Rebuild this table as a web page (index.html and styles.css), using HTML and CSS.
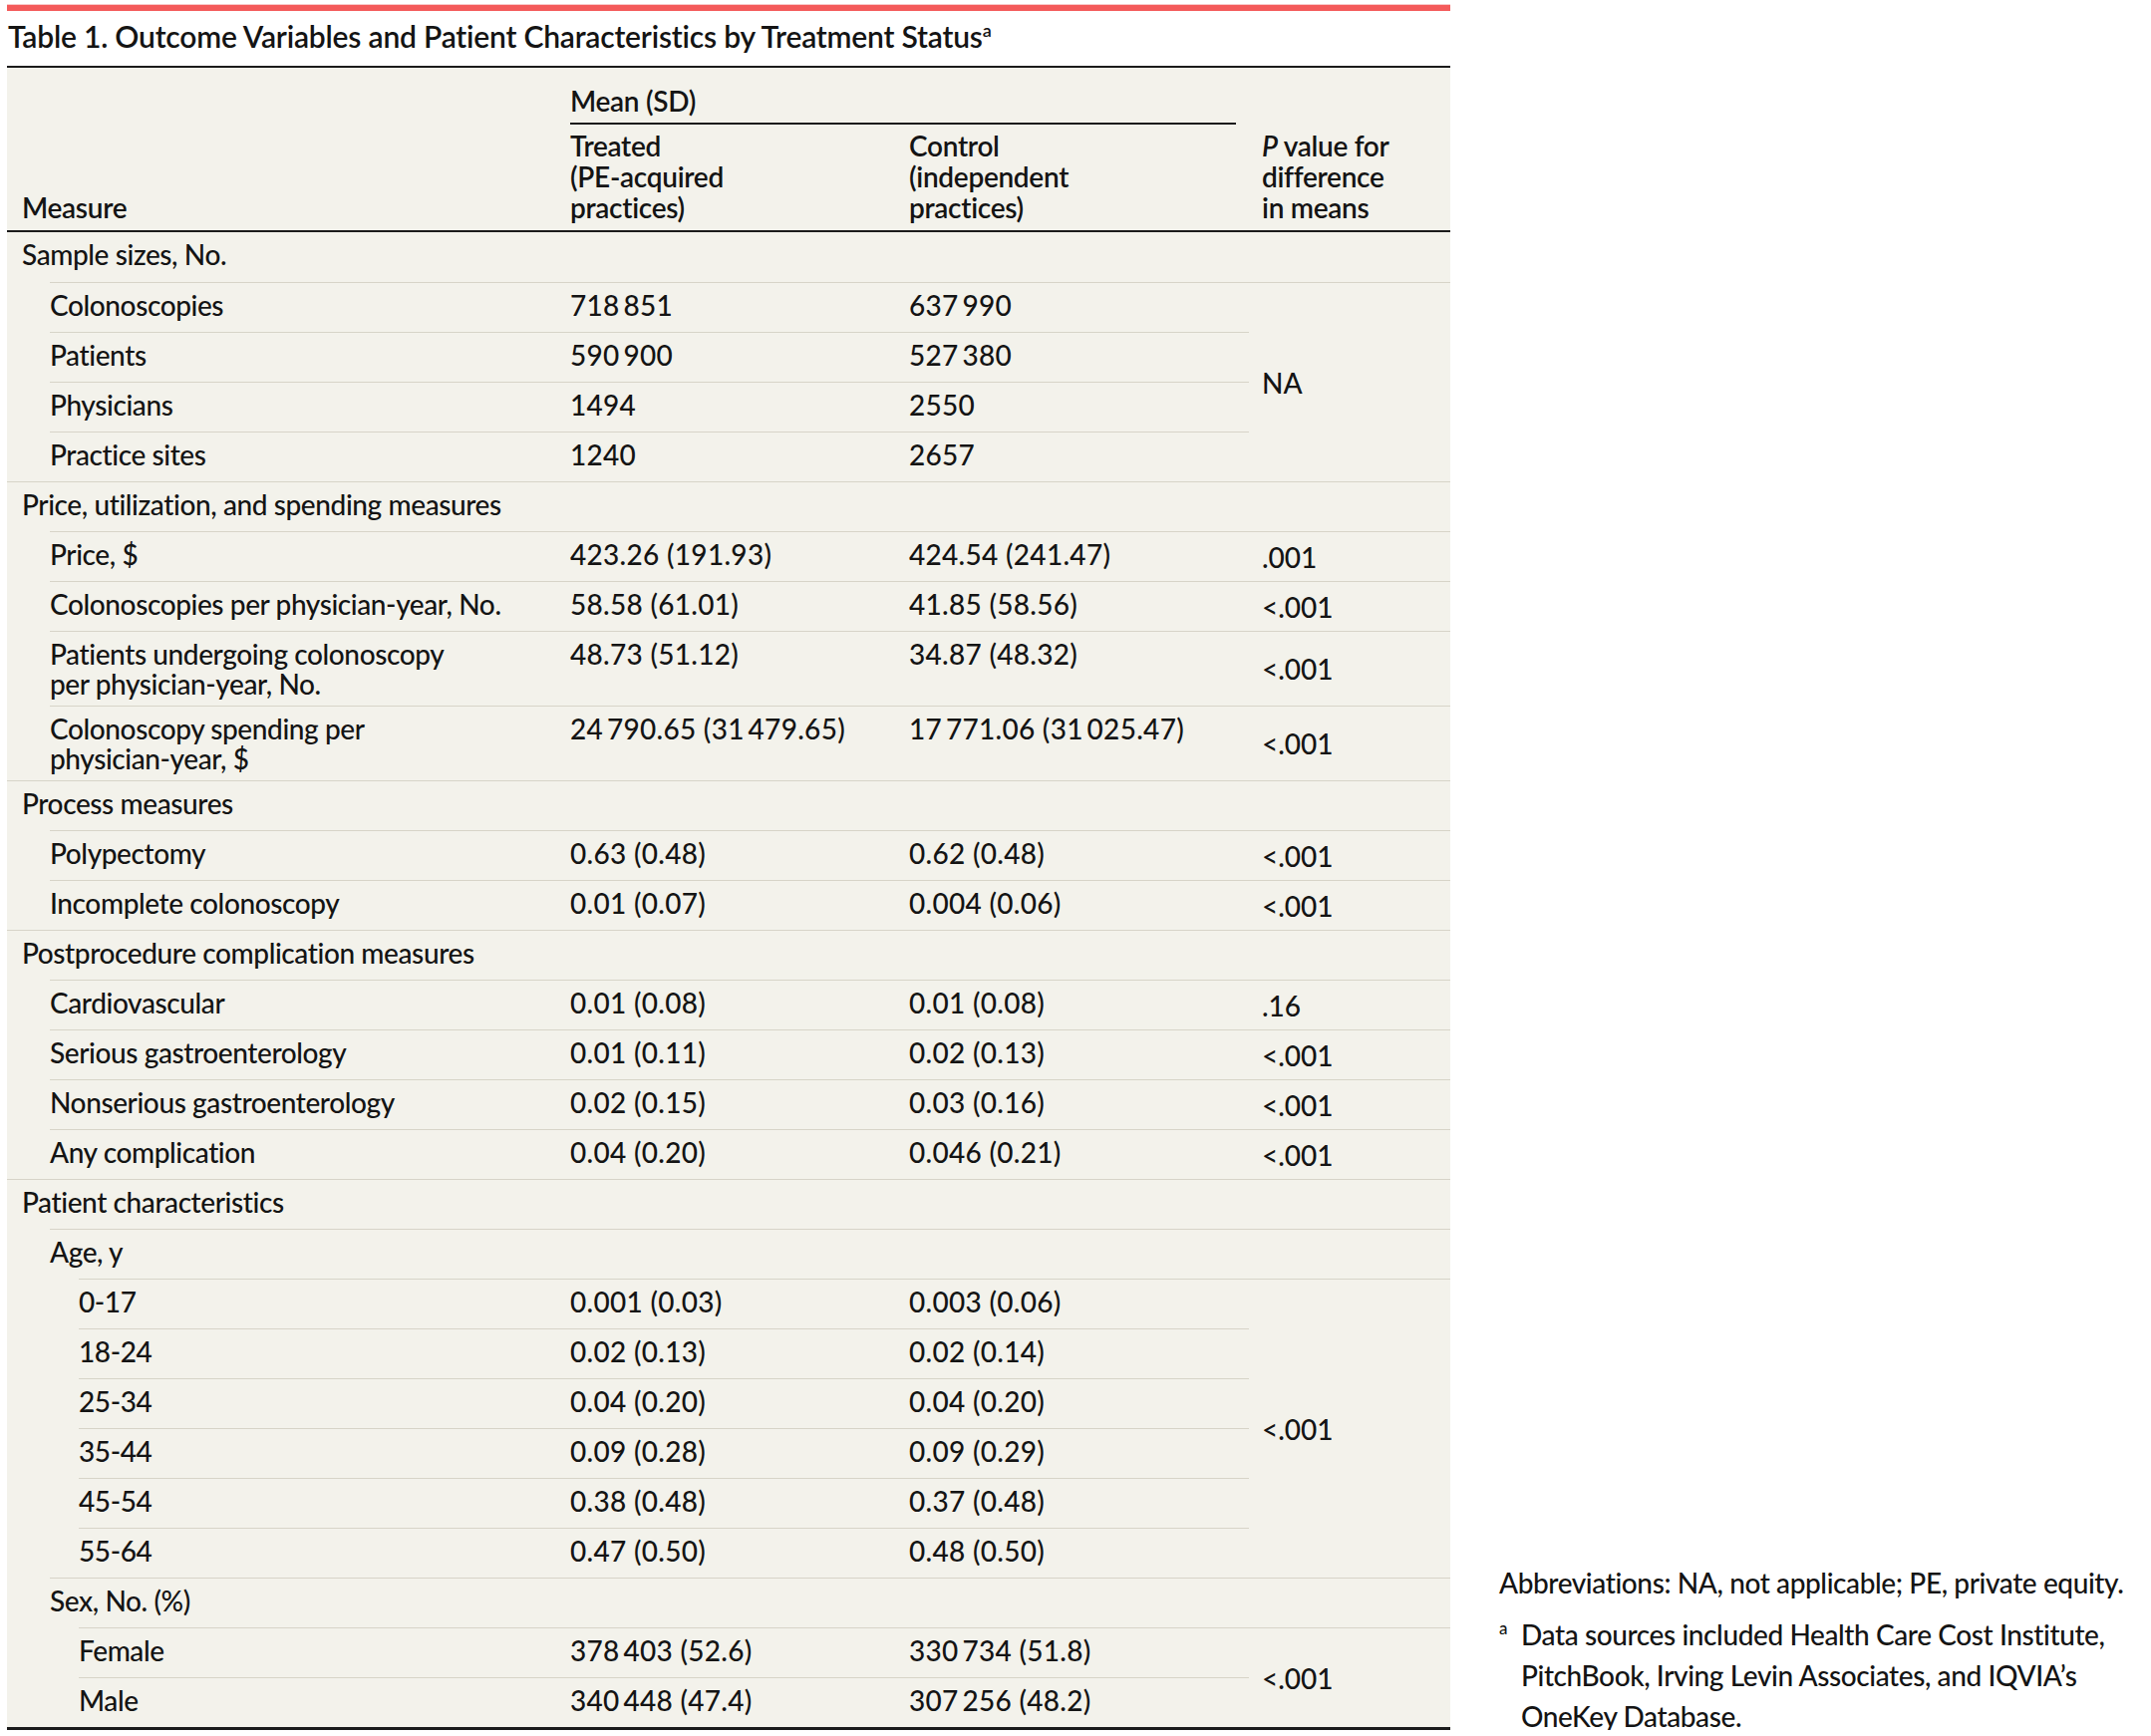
FILE: index.html
```html
<!DOCTYPE html>
<html lang="en">
<head>
<meta charset="utf-8">
<title>Table 1</title>
<link rel="stylesheet" href="styles.css">
</head>
<body>
<div class="page">
  <div class="main">
    <div class="bar"></div>
    <h1 class="title">Table 1. Outcome Variables and Patient Characteristics by Treatment Status<sup>a</sup></h1>
    <table class="tbl">
      <colgroup><col class="c1"><col class="c2"><col class="c3"><col class="c4"></colgroup>
      <thead>
        <tr>
          <th rowspan="2" class="h-end">Measure</th>
          <th colspan="2" class="h-mean"><div class="mean">Mean (SD)</div></th>
          <th rowspan="2" class="h-end h-p"><i>P</i> value for<br>difference<br>in means</th>
        </tr>
        <tr>
          <th class="h-end h-sub">Treated<br>(PE-acquired<br>practices)</th>
          <th class="h-end h-sub">Control<br>(independent<br>practices)</th>
        </tr>
      </thead>
      <tbody>
        <tr class="grp first"><td colspan="4">Sample sizes, No.</td></tr>
        <tr><td class="m"><div class="l1">Colonoscopies</div></td><td>718&#8201;851</td><td>637&#8201;990</td><td class="p" rowspan="4">NA</td></tr>
        <tr><td class="m"><div class="l1">Patients</div></td><td>590&#8201;900</td><td>527&#8201;380</td></tr>
        <tr><td class="m"><div class="l1">Physicians</div></td><td>1494</td><td>2550</td></tr>
        <tr><td class="m"><div class="l1">Practice sites</div></td><td>1240</td><td>2657</td></tr>

        <tr class="grp"><td colspan="4">Price, utilization, and spending measures</td></tr>
        <tr><td class="m"><div class="l1">Price, $</div></td><td>423.26 (191.93)</td><td>424.54 (241.47)</td><td class="p">.001</td></tr>
        <tr><td class="m"><div class="l1">Colonoscopies per physician-year, No.</div></td><td>58.58 (61.01)</td><td>41.85 (58.56)</td><td class="p">&lt;.001</td></tr>
        <tr><td class="m"><div class="l1">Patients undergoing colonoscopy<br>per physician-year, No.</div></td><td>48.73 (51.12)</td><td>34.87 (48.32)</td><td class="p">&lt;.001</td></tr>
        <tr><td class="m"><div class="l1">Colonoscopy spending per<br>physician-year, $</div></td><td>24&#8201;790.65 (31&#8201;479.65)</td><td>17&#8201;771.06 (31&#8201;025.47)</td><td class="p">&lt;.001</td></tr>

        <tr class="grp"><td colspan="4">Process measures</td></tr>
        <tr><td class="m"><div class="l1">Polypectomy</div></td><td>0.63 (0.48)</td><td>0.62 (0.48)</td><td class="p">&lt;.001</td></tr>
        <tr><td class="m"><div class="l1">Incomplete colonoscopy</div></td><td>0.01 (0.07)</td><td>0.004 (0.06)</td><td class="p">&lt;.001</td></tr>

        <tr class="grp"><td colspan="4">Postprocedure complication measures</td></tr>
        <tr><td class="m"><div class="l1">Cardiovascular</div></td><td>0.01 (0.08)</td><td>0.01 (0.08)</td><td class="p">.16</td></tr>
        <tr><td class="m"><div class="l1">Serious gastroenterology</div></td><td>0.01 (0.11)</td><td>0.02 (0.13)</td><td class="p">&lt;.001</td></tr>
        <tr><td class="m"><div class="l1">Nonserious gastroenterology</div></td><td>0.02 (0.15)</td><td>0.03 (0.16)</td><td class="p">&lt;.001</td></tr>
        <tr><td class="m"><div class="l1">Any complication</div></td><td>0.04 (0.20)</td><td>0.046 (0.21)</td><td class="p">&lt;.001</td></tr>

        <tr class="grp"><td colspan="4">Patient characteristics</td></tr>
        <tr class="sub"><td class="m"><div class="l1">Age, y</div></td><td></td><td></td><td></td></tr>
        <tr><td class="m"><div class="l2">0-17</div></td><td>0.001 (0.03)</td><td>0.003 (0.06)</td><td class="p" rowspan="6">&lt;.001</td></tr>
        <tr><td class="m"><div class="l2">18-24</div></td><td>0.02 (0.13)</td><td>0.02 (0.14)</td></tr>
        <tr><td class="m"><div class="l2">25-34</div></td><td>0.04 (0.20)</td><td>0.04 (0.20)</td></tr>
        <tr><td class="m"><div class="l2">35-44</div></td><td>0.09 (0.28)</td><td>0.09 (0.29)</td></tr>
        <tr><td class="m"><div class="l2">45-54</div></td><td>0.38 (0.48)</td><td>0.37 (0.48)</td></tr>
        <tr><td class="m"><div class="l2">55-64</div></td><td>0.47 (0.50)</td><td>0.48 (0.50)</td></tr>
        <tr class="sub"><td class="m"><div class="l1">Sex, No. (%)</div></td><td></td><td></td><td></td></tr>
        <tr><td class="m"><div class="l2">Female</div></td><td>378&#8201;403 (52.6)</td><td>330&#8201;734 (51.8)</td><td class="p" rowspan="2">&lt;.001</td></tr>
        <tr><td class="m"><div class="l2">Male</div></td><td>340&#8201;448 (47.4)</td><td>307&#8201;256 (48.2)</td></tr>
      </tbody>
    </table>
  </div>
  <aside class="notes">
    <p class="abbr">Abbreviations: NA, not applicable; PE, private equity.</p>
    <div class="fn"><sup>a</sup><p>Data sources included Health Care Cost Institute, PitchBook, Irving Levin Associates, and IQVIA’s OneKey Database.</p></div>
  </aside>
</div>
</body>
</html>
```

FILE: styles.css
```css
html, body {
  margin: 0;
  padding: 0;
  background: #ffffff;
}

body {
  font-family: Lato, "Liberation Sans", sans-serif;
  color: #141414;
}

.page {
  display: flex;
  align-items: flex-end;
  padding: 4px 0 0 7px;
}

.main {
  flex: none;
  width: 1448px;
}

.bar {
  height: 6px;
  background: #f45b5b;
  border-top: 1px solid #f9c9c9;
}

.title {
  margin: 7px 0 12px 1px;
  font-size: 30px;
  line-height: 36px;
  font-weight: 600;
  letter-spacing: -0.2px;
}

.title sup {
  font-size: 18px;
  line-height: 0;
  vertical-align: 11px;
  font-weight: 600;
}

.tbl {
  width: 1448px;
  table-layout: fixed;
  border-collapse: separate;
  border-spacing: 0;
  background: #f3f2eb;
  border-top: 2px solid #1b1b1b;
  border-bottom: 3px solid #1b1b1b;
  font-size: 28px;
  line-height: 30px;
  font-weight: 500;
}

.c1 { width: 550px; }
.c2 { width: 340px; }
.c3 { width: 356px; }
.c4 { width: 202px; }

th {
  font-weight: 600;
  text-align: left;
  vertical-align: bottom;
  padding: 0 15px;
  line-height: 31px;
  letter-spacing: -0.3px;
}

.h-end {
  padding-top: 6px;
  padding-bottom: 7px;
  border-bottom: 2px solid #1b1b1b;
}

.h-p {
  padding-left: 13px;
}

.h-mean {
  padding: 0 13px 0 15px;
}

.mean {
  padding: 18px 0 6px;
  border-bottom: 2px solid #1b1b1b;
}

tbody tr {
  height: 50px;
}

td {
  padding: 7px 15px 7px;
  vertical-align: top;
  border-top: 1px solid #d7d4c8;
  letter-spacing: 0.3px;
}

.grp td {
  letter-spacing: -0.4px;
}

.grp.first td {
  border-top: none;
}

td.m {
  padding: 0;
  border-top: none;
  letter-spacing: -0.4px;
}

td.m > div {
  padding: 7px 15px 7px 0;
  border-top: 1px solid #d7d4c8;
}

.l1 { margin-left: 43px; }
.l2 { margin-left: 72px; }

td.p {
  vertical-align: middle;
  padding-left: 13px;
  letter-spacing: 0;
}

.notes {
  flex: none;
  width: 640px;
  margin-left: 49px;
  margin-bottom: -7px;
  font-size: 28px;
  line-height: 41px;
  font-weight: 500;
  letter-spacing: -0.4px;
}

.notes p {
  margin: 0;
}

.abbr {
  white-space: nowrap;
  margin-bottom: 11px !important;
}

.fn {
  display: grid;
  grid-template-columns: 22px 1fr;
}

.fn sup {
  font-size: 17px;
  line-height: 1;
  margin-top: 5px;
}
```
